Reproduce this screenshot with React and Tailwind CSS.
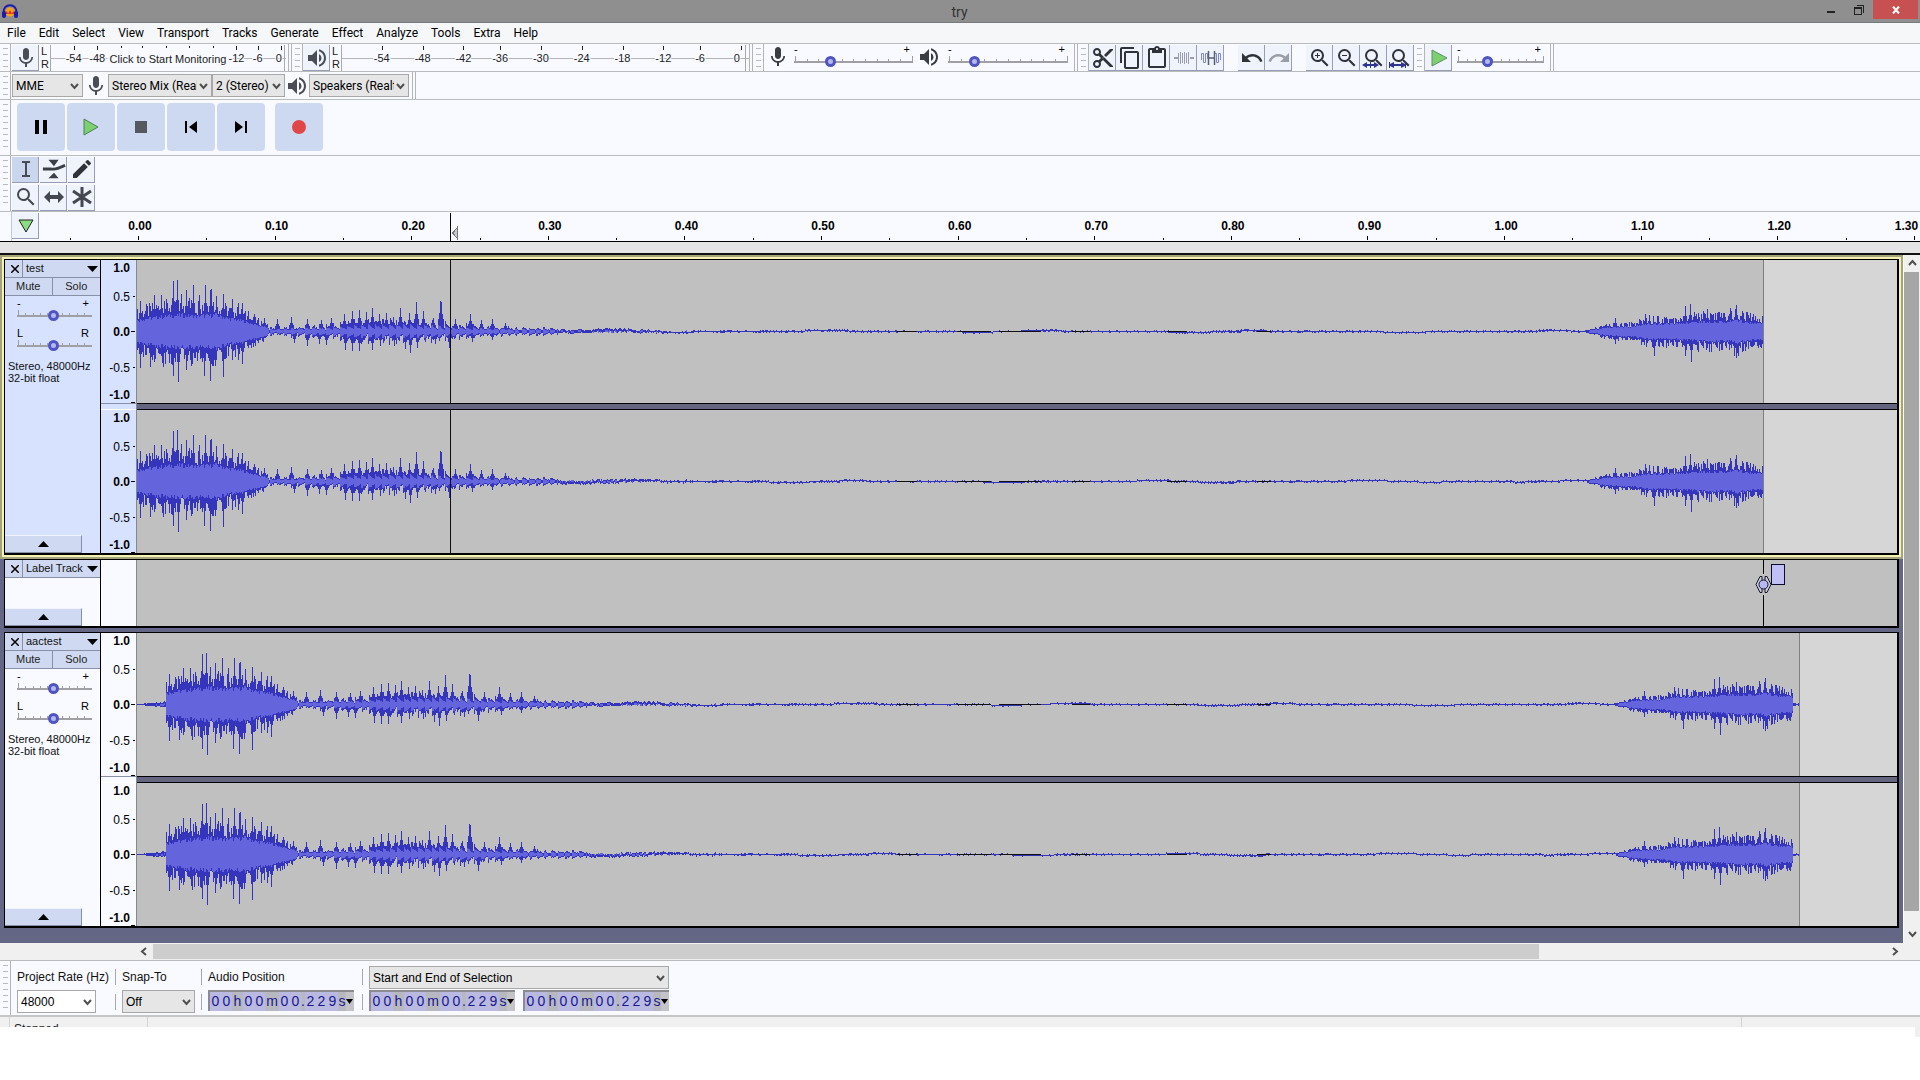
import React, { useMemo, useState } from "react";
import {
  MdContentCopy,
  MdContentCut,
  MdContentPaste,
  MdEdit,
  MdMic,
  MdRedo,
  MdSearch,
  MdUndo,
  MdVolumeUp,
  MdZoomIn,
  MdZoomOut,
} from "react-icons/md";

const MENUS = [
  "File",
  "Edit",
  "Select",
  "View",
  "Transport",
  "Tracks",
  "Generate",
  "Effect",
  "Analyze",
  "Tools",
  "Extra",
  "Help",
];

// Size of one channel drawing, in its own units
const WAVE_W = 1760;
const WAVE_H = 143;

// Loudness envelope: [position, height]
const ENVELOPE = [
  [0, 21], [10, 25], [30, 30], [45, 31], [60, 30], [80, 32], [90, 25], [105, 21],
  [115, 14], [125, 10], [135, 4], [150, 5], [170, 7], [200, 8], [215, 12], [240, 13],
  [275, 13], [300, 11], [320, 8], [345, 6], [380, 4], [410, 4], [425, 3], [470, 2],
  [540, 1], [1440, 1], [1450, 1], [1466, 6], [1480, 8], [1495, 9], [1510, 14],
  [1540, 15], [1560, 18], [1575, 19], [1590, 18], [1600, 21], [1610, 17], [1626, 14],
];

// Single peaks above the envelope: [position, height]
const PEAKS_UP = [
  [3, 30], [10, 21], [17, 36], [24, 36], [27, 30], [36, 50], [40, 51], [44, 37],
  [49, 41], [52, 33], [56, 46], [62, 36], [68, 46], [73, 41], [74, 42], [79, 35],
  [86, 37], [95, 32], [101, 28], [105, 28], [111, 20], [117, 17], [127, 13], [140, 12],
  [154, 14], [170, 12], [184, 11], [194, 13], [207, 17], [215, 20], [222, 21],
  [229, 19], [235, 23], [242, 17], [249, 18], [256, 14], [263, 23], [272, 18],
  [279, 29], [286, 20], [296, 13], [303, 30], [304, 29], [318, 12], [333, 17],
  [344, 11], [355, 12], [368, 8], [1478, 13], [1508, 17], [1512, 16], [1548, 25],
  [1553, 27], [1561, 18], [1570, 22], [1593, 23], [1599, 26], [1610, 19], [1625, 14],
];

const PEAKS_DOWN = [
  [3, 36], [13, 35], [17, 30], [26, 35], [32, 31], [36, 44], [41, 50], [49, 38],
  [54, 34], [67, 44], [73, 49], [78, 34], [86, 45], [95, 28], [101, 28], [105, 32],
  [118, 14], [157, 11], [170, 14], [182, 12], [189, 13], [208, 18], [215, 19],
  [222, 19], [235, 18], [243, 14], [257, 14], [268, 17], [273, 21], [280, 16],
  [298, 12], [312, 16], [335, 10], [355, 8], [1478, 12], [1517, 24], [1548, 24],
  [1554, 30], [1572, 20], [1597, 24], [1599, 26], [1601, 24], [1615, 15],
];

const noise = (n) => {
  const v = Math.sin(n * 12.9898) * 43758.5453;
  return v - Math.floor(v);
};

const envelopeAt = (x) => {
  for (let i = 1; i < ENVELOPE.length; i++) {
    const [x1, y1] = ENVELOPE[i];
    const [x0, y0] = ENVELOPE[i - 1];
    if (x <= x1) return y0 + ((y1 - y0) * (x - x0)) / (x1 - x0);
  }
  return 0;
};

const peakAt = (peaks, x) => {
  let h = 0;
  peaks.forEach(([px, ph]) => {
    const d = Math.abs(px - x);
    if (d === 0) h = Math.max(h, ph);
    if (d === 1) h = Math.max(h, ph * 0.6);
    if (d === 2) h = Math.max(h, ph * 0.4);
  });
  return h;
};

// Returns the two paths of a channel: full peaks and the lighter inner part
const buildWave = (shift, seed, end) => {
  let peak = "";
  let inner = "";
  const mid = 71;
  for (let x = 0; x < end; x++) {
    const pos = x - shift;
    let up;
    let down;
    let drift = 0;
    let burst = 1;
    if (pos < 0) {
      up = Math.round((x / shift) * (1 + 2 * noise(x + seed)));
      down = Math.round((x / shift) * (1 + 2 * noise(x + seed + 9)));
    } else if (pos > 1626) {
      up = noise(x + seed) > 0.6 ? 1 : 0;
      down = noise(x + 3) > 0.6 ? 1 : 0;
    } else {
      const env = envelopeAt(pos);
      // short bursts between the attack and the quiet part
      if (pos > 130 && pos < 420) burst = 0.2 + 0.8 * (1 - (pos % 7) / 7);
      up = Math.max(env * burst * (0.5 + 0.6 * noise(pos + 1)), peakAt(PEAKS_UP, pos));
      down = Math.max(
        env * burst * (0.5 + 0.6 * noise(pos * 1.7 + 40)),
        peakAt(PEAKS_DOWN, pos)
      );
      if (pos > 420 && pos < 1450) {
        drift = Math.round(0.9 * Math.sin(pos / 23 + seed) * Math.sin(pos / 61 + seed * 2));
        up = noise(pos + seed) > 0.75 ? 1 : 0;
        down = noise(pos + seed + 7) > 0.75 ? 1 : 0;
        if (pos < 560) {
          up += noise(pos + 2) > (pos - 400) / 160 ? 1 : 0;
          down += noise(pos + 5) > (pos - 400) / 160 ? 1 : 0;
        }
      }
    }
    up = Math.round(up);
    down = Math.round(down);
    peak += `M${x} ${mid - up + drift}h1v${up + down + 1}h-1z`;
    const env = pos < 0 ? 1 : pos > 1626 ? 0 : envelopeAt(pos) * burst;
    const iu = Math.min(up - 1, Math.round(env * (0.42 + 0.15 * noise(pos + 77))));
    const id = Math.min(down - 1, Math.round(env * (0.42 + 0.15 * noise(pos + 99))));
    if (iu + id > 0) {
      inner += `M${x} ${mid - iu}h1v${iu + id + 1}h-1z`;
    }
  }
  return { peak, inner };
};

const Grabber = () => (
  <div className="flex w-[11px] shrink-0 justify-center self-stretch border-r border-[#b4b4b4] py-1">
    <div className="w-[5px] bg-[repeating-linear-gradient(to_bottom,#b8bbc4_0_1px,transparent_1px_6px)]" />
  </div>
);

const BarEnd = () => (
  <div className="w-1 shrink-0 self-stretch border-x border-[#b4b4b4]" />
);

const ToolButton = ({ label, active, children }) => (
  <button
    aria-label={label}
    className={`flex h-[26px] w-[27px] shrink-0 items-center justify-center border-r border-b border-[#989db4] pl-[2px] text-[#30323a] ${
      active ? "bg-[#cad6ee]" : "bg-[#eff3fc]"
    }`}
  >
    {children}
  </button>
);

// Slider with its ruler marks, the marks sit behind the thumb
const Slider = ({ label, low, high, value, marks = 11, className }) => {
  const [current, setCurrent] = useState(value);
  return (
    <label className={`flex flex-col text-[11px] leading-[11px] text-black ${className}`}>
      <span className="flex justify-between pr-[3px]">
        <span>{low}</span>
        <span>{high}</span>
      </span>
      <span className="relative block h-[11px]">
        <svg className="absolute inset-0 h-full w-full" shapeRendering="crispEdges" aria-hidden="true">
          <rect x="0" y="6" width="100%" height="2" fill="#a0a0a4" />
          <svg x="1" width="98%" height="11" overflow="visible">
            {Array.from({ length: marks }, (_, i) => (
              <rect
                key={i}
                x={`${(i * 100) / (marks - 1)}%`}
                y={i === 0 || i === marks - 1 ? 1 : 4}
                width="1"
                height={i === 0 || i === marks - 1 ? 6 : 3}
                fill="#a0a0a4"
              />
            ))}
          </svg>
        </svg>
        <input
          type="range"
          min="0"
          max="100"
          aria-label={label}
          value={current}
          onChange={(e) => setCurrent(e.target.value)}
          className="absolute inset-x-0 top-px h-[11px] w-full appearance-none bg-transparent [&::-webkit-slider-thumb]:size-[11px] [&::-webkit-slider-thumb]:appearance-none [&::-webkit-slider-thumb]:rounded-full [&::-webkit-slider-thumb]:border-[3px] [&::-webkit-slider-thumb]:border-[#4f54c4] [&::-webkit-slider-thumb]:bg-[#b4b8ee]"
        />
      </span>
    </label>
  );
};

const Combo = ({ label, value, className, tone = "bg-[#e6e6e6]" }) => (
  <div className={`relative shrink-0 ${className}`}>
    <select
      aria-label={label}
      defaultValue={value}
      className={`block h-full w-full appearance-none border border-[#a8a8a8] pr-[14px] pl-[3px] text-[12px] leading-4 text-black ${tone}`}
    >
      <option>{value}</option>
    </select>
    <svg
      className="pointer-events-none absolute top-1/2 right-1 -mt-[3px]"
      width="9"
      height="7"
      viewBox="0 0 9 7"
      fill="none"
      stroke="#505050"
      strokeWidth="2"
      aria-hidden="true"
    >
      <path d="M1 1l3.500 4L8 1" />
    </svg>
  </div>
);

const Meter = ({ marks, note, className }) => (
  <div className={`flex shrink-0 items-stretch ${className}`}>
    <div className="flex w-[11px] flex-col justify-between pl-[2px] text-[11px] leading-[13px] text-[#222]">
      <span>L</span>
      <span>R</span>
    </div>
    <svg className="h-[26px] min-w-0 flex-1" aria-hidden="true" shapeRendering="crispEdges">
      <rect x="0" y="0" width="1" height="26" fill="#a8a8b0" />
      <rect x="0" y="13" width="100%" height="1" fill="#b4b4b8" />
      <rect x="99%" y="0" width="1" height="26" fill="#a8a8b0" />
      {marks.map(([x, text]) => (
        <g key={x}>
          <rect x={`${x}%`} y="1" width="1" height={text ? 4 : 2} fill="#222" />
          {text && (
            <text
              x={`${text === "0" ? x - 1 : x}%`}
              y="17"
              textAnchor="middle"
              fontSize="11"
              fill="#222"
              stroke="#f8faff"
              strokeWidth="2"
              paintOrder="stroke"
            >
              {text}
            </text>
          )}
        </g>
      ))}
      {note && (
        <text
          x="50%"
          y="18"
          textAnchor="middle"
          fontSize="11"
          fill="#222"
          stroke="#f8faff"
          strokeWidth="5"
          paintOrder="stroke"
        >
          {note}
        </text>
      )}
    </svg>
  </div>
);

const RECORD_MARKS = [
  [10, "-54"], [20, "-48"], [30, ""], [39, ""], [49, ""], [59, ""], [69, ""],
  [79, "-12"], [88, "-6"], [98, "0"],
];

const PLAY_MARKS = [
  [10, "-54"], [20, "-48"], [30, "-42"], [39, "-36"], [49, "-30"], [59, "-24"],
  [69, "-18"], [79, "-12"], [88, "-6"], [98, "0"],
];

const Logo = () => (
  <svg width="18" height="18" viewBox="0 0 18 18" aria-hidden="true">
    <path d="M2.500 11C1.500 0.500 16.500 0.500 15.500 11" fill="none" stroke="#1c1ca8" strokeWidth="2" />
    <circle cx="9" cy="10" r="4.500" fill="#f6a21c" />
    <path d="M4 11l2-2 1 3 2-4 2 4 1-3 2 2v1H4z" fill="#e0301c" />
    <rect x="1" y="9" width="4" height="7" rx="2" fill="#1c1ca8" />
    <rect x="13" y="9" width="4" height="7" rx="2" fill="#1c1ca8" />
  </svg>
);

const TitleBar = () => (
  <header className="flex h-[23px] items-start border-b border-[#777b7b] bg-[#8f8f8f]">
    <div className="flex flex-1 pt-[2px] pl-px">
      <Logo />
    </div>
    <h1 className="pt-[2px] text-[14px] leading-5 text-[#333]">try</h1>
    <div className="flex flex-1 items-start justify-end pr-[2px]">
      <button aria-label="Minimize" className="flex h-[19px] w-7 items-center justify-center">
        <svg width="9" height="9" viewBox="0 0 9 9" aria-hidden="true">
          <path d="M0 6h8v2H0z" fill="#222" />
        </svg>
      </button>
      <button aria-label="Restore" className="flex h-[19px] w-7 items-center justify-center">
        <svg width="10" height="11" viewBox="0 0 10 11" fill="none" stroke="#222" shapeRendering="crispEdges" aria-hidden="true">
          <path d="M0.500 3.500h7v7h-7zM0.500 4.500h7M2.500 1.500h7v7" />
        </svg>
      </button>
      <button aria-label="Close" className="flex h-[19px] w-[45px] items-center justify-center bg-[#c75050]">
        <svg width="8" height="8" viewBox="0 0 8 8" stroke="#fff" strokeWidth="2" aria-hidden="true">
          <path d="M1 0.500l6 7M7 0.500l-6 7" />
        </svg>
      </button>
    </div>
  </header>
);

const MenuBar = () => (
  <nav className="flex h-5 items-center gap-[13px] bg-[#f5f7f8] pl-[7px] text-[12px] leading-5 text-black">
    {MENUS.map((menu) => (
      <button key={menu}>{menu}</button>
    ))}
  </nav>
);

const ZoomArrows = ({ d }) => (
  <span className="relative">
    <MdSearch size={24} />
    <svg className="absolute top-[15px] left-0" width="22" height="8" viewBox="0 0 22 8" fill="#2f3490" aria-hidden="true">
      <path d={d} />
    </svg>
  </span>
);

const MeterRow = () => (
  <div className="flex h-7 items-end border-t border-[#b8bcbc] bg-[#f9faff]">
    <Grabber />
    <div className="flex w-[277px] items-center pl-px">
      <ToolButton label="Record meter">
        <MdMic size={24} className="text-[#4a4d55]" />
      </ToolButton>
      <Meter marks={RECORD_MARKS} note="Click to Start Monitoring" className="w-[247px]" />
    </div>
    <BarEnd />
    <Grabber />
    <div className="flex w-[446px] items-center">
      <ToolButton label="Playback meter">
        <MdVolumeUp size={24} className="text-[#4a4d55]" />
      </ToolButton>
      <Meter marks={PLAY_MARKS} className="w-[419px]" />
    </div>
    <BarEnd />
    <Grabber />
    <div className="flex w-[310px] items-start self-stretch pl-[2px]">
      <MdMic size={24} className="mt-px text-[#3a3c44]" />
      <Slider label="Recording volume" low="-" high="+" value={29} className="ml-[4px] w-[119px]" />
      <MdVolumeUp size={24} className="mt-px ml-[4px] text-[#3a3c44]" />
      <Slider label="Playback volume" low="-" high="+" value={19} className="ml-[7px] w-[120px]" />
    </div>
    <BarEnd />
    <Grabber />
    <ToolButton label="Cut"><MdContentCut size={24} /></ToolButton>
    <ToolButton label="Copy"><MdContentCopy size={24} /></ToolButton>
    <ToolButton label="Paste"><MdContentPaste size={24} /></ToolButton>
    <ToolButton label="Trim audio">
      <svg width="20" height="16" viewBox="0 0 20 16" fill="none" stroke="#9a9fb0" aria-hidden="true">
        <path d="M0 8h4M16 8h4" strokeWidth="2" />
        <path d="M4.500 3v10M6.500 2v12M8.500 3v10M10.500 2v12M12.500 3v10M14.500 2v12" />
      </svg>
    </ToolButton>
    <ToolButton label="Silence audio">
      <svg width="22" height="16" viewBox="0 0 22 16" fill="none" aria-hidden="true">
        <path d="M1.500 10V3.500h2v9h2v-9h2V9M14.500 9V3.500h2v9h2v-9h2V10" stroke="#8088dc" />
        <path d="M8.500 1v14M14.500 1v14M9 8h5" stroke="#5a5f78" strokeWidth="1.500" />
      </svg>
    </ToolButton>
    <div className="w-[14px]" />
    <ToolButton label="Undo"><MdUndo size={24} /></ToolButton>
    <ToolButton label="Redo"><MdRedo size={24} className="text-[#9a9da6]" /></ToolButton>
    <div className="w-[14px]" />
    <ToolButton label="Zoom in"><MdZoomIn size={24} /></ToolButton>
    <ToolButton label="Zoom out"><MdZoomOut size={24} /></ToolButton>
    <ToolButton label="Fit selection">
      <ZoomArrows d="M0 4l5-3v2h3v2H5v2zM17 4l-5-3v2H9v2h3v2zM8 1h1v6H8z" />
    </ToolButton>
    <ToolButton label="Fit project">
      <ZoomArrows d="M0 1h1v2l4-2v2h7V1l4 2V1h1v6h-1V5l-4 2V5H5v2L1 5v2H0z" />
    </ToolButton>
    <Grabber />
    <ToolButton label="Play at speed">
      <svg width="17" height="18" viewBox="0 0 17 18" aria-hidden="true">
        <path d="M1 1l15 8-15 8z" fill="#7cd070" stroke="#5f8f68" />
      </svg>
    </ToolButton>
    <Slider label="Playback speed" low="-" high="+" value={33} className="ml-[5px] w-[87px] self-start" />
    <div className="ml-[6px] flex self-stretch"><BarEnd /></div>
  </div>
);

const DeviceRow = () => (
  <div className="flex h-7 items-center border-t border-[#b8bcbc] bg-[#f9faff]">
    <Grabber />
    <Combo label="Audio host" value="MME" className="ml-px h-[23px] w-[71px]" />
    <MdMic size={24} className="mx-px shrink-0 text-[#4a4d55]" />
    <Combo label="Recording device" value="Stereo Mix (Realtek)" className="-ml-px h-[23px] w-[104px]" />
    <Combo label="Recording channels" value="2 (Stereo)" className="h-[23px] w-[73px]" />
    <MdVolumeUp size={24} className="shrink-0 text-[#4a4d55]" />
    <Combo label="Playback device" value="Speakers (Realtek)" className="h-[23px] w-[100px]" />
    <div className="ml-[3px] flex self-stretch"><BarEnd /></div>
  </div>
);

const TransportButton = ({ label, className = "", children }) => (
  <button
    aria-label={label}
    className={`flex size-12 items-center justify-center rounded bg-[#cdd9f0] ${className}`}
  >
    <svg width="18" height="18" viewBox="0 0 18 18" aria-hidden="true">
      {children}
    </svg>
  </button>
);

const TransportRow = () => (
  <div className="flex h-14 items-start border-t border-[#b8bcbc] bg-[#f9faff]">
    <Grabber />
    <div className="flex gap-[2px] pt-[3px] pl-[6px]">
      <TransportButton label="Pause">
        <path d="M3 2h4v14H3zM11 2h4v14h-4z" />
      </TransportButton>
      <TransportButton label="Play">
        <path d="M2 1l14 8-14 8z" fill="#7cd070" stroke="#4e7f5c" />
      </TransportButton>
      <TransportButton label="Stop">
        <path d="M3 3h12v12H3z" fill="#55585e" />
      </TransportButton>
      <TransportButton label="Skip to start">
        <path d="M3 3h2v12H3zM15 3v12L7 9z" />
      </TransportButton>
      <TransportButton label="Skip to end">
        <path d="M13 3h2v12h-2zM3 3v12l8-6z" />
      </TransportButton>
      <TransportButton label="Record" className="ml-2">
        <circle cx="9" cy="9" r="7" fill="#e04848" />
      </TransportButton>
    </div>
  </div>
);

const ToolsRow = () => (
  <div className="flex h-14 items-center border-t border-[#b8bcbc] bg-[#f9faff]">
    <Grabber />
    <div className="grid grid-cols-3 gap-x-px gap-y-[2px] pl-px">
      <ToolButton label="Selection tool" active>
        <svg width="12" height="18" viewBox="0 0 12 18" fill="none" stroke="#484b54" strokeWidth="2" aria-hidden="true">
          <path d="M2 2h3l1 1 1-1h3M6 3v12M2 16h3l1-1 1 1h3" />
        </svg>
      </ToolButton>
      <ToolButton label="Envelope tool">
        <svg width="24" height="20" viewBox="0 0 26 20" fill="#3c3f47" aria-hidden="true">
          <path d="M7 0h11l-5 7zM7 20h11l-5-6z" />
          <path d="M1 10h9c5 1 9-1 15-4" fill="none" stroke="#3c3f47" strokeWidth="3" />
        </svg>
      </ToolButton>
      <ToolButton label="Draw tool"><MdEdit size={24} /></ToolButton>
      <ToolButton label="Zoom tool"><MdSearch size={24} className="text-[#444750]" /></ToolButton>
      <ToolButton label="Time shift tool">
        <svg width="20" height="12" viewBox="0 0 20 12" fill="#444750" aria-hidden="true">
          <path d="M0 6l6-6v4h8V0l6 6-6 6V8H6v4z" />
        </svg>
      </ToolButton>
      <ToolButton label="Multi-tool">
        <svg width="20" height="20" viewBox="0 0 20 20" stroke="#444750" strokeWidth="3" aria-hidden="true">
          <path d="M10 0v20M1 4l18 12M19 4L1 16" />
        </svg>
      </ToolButton>
    </div>
  </div>
);

// Share of the ruler taken by a tenth of a second
const TENTH = 7.666;

const Timeline = () => (
  <div className="border-t border-[#b8bcbc] bg-[#f9faff]">
    <div className="flex h-[30px] border-b border-black">
      <div className="w-3 border-r border-[#c8c8d0]" />
      <div className="w-[126px] pt-px">
        <ToolButton label="Pinned play head">
          <svg width="18" height="14" viewBox="0 0 18 14" aria-hidden="true">
            <path d="M2 1h14L9 13z" fill="#8bdc80" stroke="#222" />
          </svg>
        </ToolButton>
      </div>
      <svg className="h-[29px] min-w-0 flex-1 overflow-visible" aria-label="Timeline" shapeRendering="crispEdges">
        <rect x={`${-TENTH / 2}%`} y="26" width="1" height="2" />
        {Array.from({ length: 14 }, (_, i) => (
          <g key={i}>
            <rect x={`${i * TENTH}%`} y="24" width="1" height="4" />
            {i < 13 && <rect x={`${(i + 0.5) * TENTH}%`} y="26" width="1" height="2" />}
            <text
              x={i === 13 ? "99.900%" : `${i * TENTH}%`}
              dx={i === 13 ? 0 : 2}
              y="18"
              textAnchor={i === 13 ? "end" : "middle"}
              fontSize="12"
              fontWeight="bold"
            >
              {(i / 10).toFixed(2)}
            </text>
          </g>
        ))}
        <rect x="17.500%" y="1" width="1" height="28" />
        <svg x="17.600%" y="14" width="7" height="14">
          <path d="M1 7l5-6v12z" fill="#c8c8c8" stroke="#777" />
        </svg>
      </svg>
    </div>
    <div className="h-[13px] border-b-2 border-[#111] bg-[#e4e4e4]" />
  </div>
);

const VerticalRuler = ({ selected }) => (
  <svg
    className={`block h-[143px] w-full ${selected ? "bg-[#d6e2ff]" : "bg-[#f8faff]"}`}
    viewBox="0 0 35 143"
    fontSize="12"
    textAnchor="end"
    shapeRendering="crispEdges"
  >
    <text x="29" y="12" fontWeight="bold">1.0</text>
    <text x="29" y="41">0.5</text>
    <text x="29" y="76" fontWeight="bold">0.0</text>
    <text x="29" y="112">-0.5</text>
    <text x="29" y="139" fontWeight="bold">-1.0</text>
    <path d="M32 36h2v1h-2zM30 71h4v1h-4zM32 107h2v1h-2zM30 142h4v1h-4z" />
  </svg>
);

const Channel = ({ wave, end, playhead }) => (
  <svg
    className="block h-[143px] w-full bg-[#c0c0c0]"
    viewBox={`0 0 ${WAVE_W} ${WAVE_H}`}
    preserveAspectRatio="none"
    shapeRendering="crispEdges"
    aria-label="Waveform"
  >
    <rect x={end} y="0" width={WAVE_W - end} height={WAVE_H} fill="#d6d6d6" />
    <rect x={end} y="0" width="1" height={WAVE_H} fill="#808080" />
    <path d={wave.peak} fill="#3434bc" />
    <path d={wave.inner} fill="#6464dc" />
    {/* zero line stays visible where the sound is nearly silent */}
    <path d="M760 71h20M820 71h34M862 71h42M935 71h18M1030 71h20M1120 71h14" stroke="#111" />
    {playhead && <rect x="313" y="0" width="1" height={WAVE_H} fill="#111" />}
  </svg>
);

const TrackHeader = ({ name }) => (
  <div className="flex h-[18px] border-b border-[#8890a8] bg-[#cfdaf2] text-[11px] leading-[17px] text-[#111]">
    <button aria-label={`Close ${name}`} className="flex w-[18px] items-center justify-center border-r border-[#8890a8] pl-[2px]">
      <svg width="8" height="8" viewBox="0 0 8 8" stroke="#000" strokeWidth="1.500" aria-hidden="true">
        <path d="M0 0l8 8M8 0L0 8" />
      </svg>
    </button>
    <button className="flex flex-1 items-center justify-between pr-[2px] pl-[3px] whitespace-nowrap">
      {name}
      <svg width="11" height="6" viewBox="0 0 11 6" aria-hidden="true">
        <path d="M0 0h11L5.500 6z" />
      </svg>
    </button>
  </div>
);

const TrackPanel = ({ name, audio, selected }) => (
  <div className={`flex w-24 shrink-0 flex-col border-r border-black ${selected ? "bg-[#d6e2ff]" : "bg-[#f8faff]"}`}>
    <TrackHeader name={name} />
    {audio && (
      <>
        <div className="grid h-[18px] grid-cols-2 border-b border-[#8890a8] bg-[#cfdaf2] text-[11px] leading-[17px] text-[#222]">
          <button className="border-r border-[#8890a8]">Mute</button>
          <button>Solo</button>
        </div>
        <Slider label={`${name} gain`} low="-" high="+" value={48} className="mt-[2px] ml-3 w-[75px]" />
        <Slider label={`${name} pan`} low="L" high="R" value={48} className="mt-2 ml-3 w-[75px]" />
        <p className="mt-[10px] pl-[3px] text-[11px] leading-3 whitespace-nowrap text-[#111]">
          Stereo, 48000Hz
          <br />
          32-bit float
        </p>
      </>
    )}
    <button
      aria-label={`Collapse ${name}`}
      className="mt-auto flex h-[18px] w-[77px] items-center justify-center border-t border-r border-b border-t-[#f0f4ff] border-r-[#8890a8] border-b-[#8890a8] bg-[#cfdaf2]"
    >
      <svg width="11" height="6" viewBox="0 0 11 6" aria-hidden="true">
        <path d="M0 6h11L5.500 0z" />
      </svg>
    </button>
  </div>
);

const AudioTrack = ({ name, selected, shift, end }) => {
  const left = useMemo(() => buildWave(shift, 3, end), [shift, end]);
  const right = useMemo(() => buildWave(shift, 11, end), [shift, end]);
  return (
    <section
      className={`flex border-t border-r-2 border-b-2 border-l border-black ${
        selected ? "shadow-[0_0_0_2px_#f6f2b4,0_0_0_4px_#a3a37c]" : ""
      }`}
    >
      <TrackPanel name={name} audio selected={selected} />
      <div className={`flex w-9 shrink-0 flex-col justify-between border-r border-[#808890] ${selected ? "bg-[#d6e2ff]" : "bg-[#f8faff]"}`}>
        <VerticalRuler selected={selected} />
        <div className="h-[7px] border-t border-b border-t-[#8890a8] border-b-white" />
        <VerticalRuler selected={selected} />
      </div>
      <div className="min-w-0 flex-1">
        <Channel wave={left} end={end} playhead={selected} />
        <div className="h-[7px] border-y border-black bg-[#64667f]" />
        <Channel wave={right} end={end} playhead={selected} />
      </div>
    </section>
  );
};

const LabelTrack = () => (
  <section className="flex border-t border-r-2 border-b-2 border-l border-black">
    <TrackPanel name="Label Track" />
    <div className="w-9 shrink-0 border-r border-[#808890] bg-[#f8faff]" />
    <div className="h-[66px] min-w-0 flex-1 bg-[#c0c0c0]">
      <svg className="block h-full w-full" viewBox="0 0 1760 66" preserveAspectRatio="none" aria-label="Label">
        <path d="M1626.500 0v14M1626.500 35v31" stroke="#000" />
        <rect x="1634.500" y="4.500" width="13" height="20" fill="#c0c0f5" stroke="#0c0c30" />
        <path
          d="M1625 16.500h-2l-3 6-1 2 1 2 3 6h2v-4M1625 16.500v4M1628 16.500h2l3 6 1 2-1 2-3 6h-2v-4M1628 16.500v4"
          fill="#c8c8d8"
          stroke="#14142c"
        />
        <circle cx="1626.500" cy="24.500" r="4.500" fill="#b8b8f0" stroke="#14142c" />
      </svg>
    </div>
  </section>
);

const Arrow = ({ d }) => (
  <svg width="9" height="9" viewBox="0 0 9 9" fill="none" stroke="#505050" strokeWidth="2" aria-hidden="true">
    <path d={d} />
  </svg>
);

const Tracks = () => (
  <main>
    <div className="flex">
      <div className="flex min-w-0 flex-1 flex-col gap-1 bg-[#646685] px-1 pt-1 pb-[15px]">
        <AudioTrack name="test" selected shift={0} end={1626} />
        <LabelTrack />
        <AudioTrack name="aactest" shift={29} end={1662} />
      </div>
      <div className="flex w-[17px] shrink-0 flex-col border-l border-white bg-[#f0f0f0]">
        <button aria-label="Scroll up" className="flex h-[17px] items-center justify-center">
          <Arrow d="M1 6l3.500-4L8 6" />
        </button>
        <div className="mr-px flex-1 bg-[#a6a6a6]" />
        <div className="h-[15px]" />
        <button aria-label="Scroll down" className="flex h-[17px] items-center justify-center">
          <Arrow d="M1 2l3.500 4L8 2" />
        </button>
      </div>
    </div>
    <div className="flex h-[17px] items-stretch bg-[#f0f0f0] pr-[17px] pl-[136px]">
      <button aria-label="Scroll left" className="flex w-[17px] items-center justify-center">
        <Arrow d="M6 1L2 4.500 6 8" />
      </button>
      <div className="flex flex-1 py-px">
        <div className="w-4/5 bg-[#cdcdcd]" />
      </div>
      <button aria-label="Scroll right" className="flex w-[17px] items-center justify-center">
        <Arrow d="M3 1l4 3.500L3 8" />
      </button>
    </div>
  </main>
);

const DIGIT = "w-[11px] bg-[#b9b9e2]";
const TIME_CELLS = [
  ["0", DIGIT], ["0", DIGIT], ["h", "w-[11px]"],
  ["0", DIGIT], ["0", DIGIT], ["m", "w-[14px]"],
  ["0", DIGIT], ["0", DIGIT], [".", "w-1"],
  ["2", DIGIT], ["2", DIGIT], ["9", DIGIT], ["s", "w-2"],
];

const TimeField = ({ label }) => (
  <div
    role="group"
    aria-label={label}
    className="flex h-[21px] w-[146px] border-t-2 border-l-2 border-[#8c8c90] bg-[#b8b8c0] text-center text-[14px] leading-[19px] text-[#18188c]"
  >
    {TIME_CELLS.map(([text, cell], i) => (
      <span key={i} className={cell}>{text}</span>
    ))}
    <button aria-label={`${label} format`} className="flex flex-1 items-center bg-[#c4c4c8]">
      <svg width="7" height="5" viewBox="0 0 7 5" aria-hidden="true">
        <path d="M0 0h7L3.500 5z" />
      </svg>
    </button>
  </div>
);

const Separator = () => (
  <div className="flex w-px flex-col gap-[9px] pt-[8px]">
    <div className="h-4 bg-[#a8a8b0]" />
    <div className="h-4 bg-[#a8a8b0]" />
  </div>
);

const SelectionBar = () => (
  <footer>
    <div className="flex h-[57px] border-t border-b-2 border-t-[#b8bcbc] border-b-[#c4c6c8] bg-[#f9faff] text-[12px] leading-[23px] text-[#111]">
      <Grabber />
      <div className="w-[104px] pt-[5px] pl-[6px] whitespace-nowrap">
        <div>Project Rate (Hz)</div>
        <Combo label="Project Rate (Hz)" value="48000" tone="bg-white" className="mt-px h-[23px] w-[79px]" />
      </div>
      <Separator />
      <div className="w-[85px] pt-[5px] pl-[6px]">
        <div>Snap-To</div>
        <Combo label="Snap-To" value="Off" className="mt-px h-[23px] w-[73px]" />
      </div>
      <Separator />
      <div className="flex w-[160px] flex-col gap-px pt-[5px] pl-[6px]">
        <div>Audio Position</div>
        <TimeField label="Audio Position" />
      </div>
      <Separator />
      <div className="flex flex-col gap-px pt-[5px] pl-[6px]">
        <Combo label="Selection format" value="Start and End of Selection" className="h-[23px] w-[300px]" />
        <div className="flex gap-2">
          <TimeField label="Selection start" />
          <TimeField label="Selection end" />
        </div>
      </div>
    </div>
    {/* only the top of the status line is inside the window */}
    <div className="flex h-[10px] overflow-hidden bg-[#f0f0f0] text-[12px] leading-4 text-[#222]">
      <div className="w-[10px] shrink-0 border-r border-[#d4d4d4]" />
      <div className="h-5 w-[138px] shrink-0 border-r border-[#d4d4d4] pt-1 pl-1">Stopped.</div>
      <div className="flex-1" />
      <div className="w-[179px] border-l border-[#d4d4d4]" />
    </div>
    <div className="ml-auto h-[10px] w-[5px] bg-[#f0f0f0]" />
  </footer>
);

const App = () => (
  <div className="min-h-screen bg-white font-['Liberation_Sans',Arial,sans-serif]">
    <div className="font-[Roboto,'Open_Sans',sans-serif]">
      <TitleBar />
      <MenuBar />
    </div>
    <MeterRow />
    <div className="font-[Roboto,'Open_Sans',sans-serif]">
      <DeviceRow />
    </div>
    <TransportRow />
    <ToolsRow />
    <Timeline />
    <Tracks />
    <SelectionBar />
  </div>
);

export default App;
